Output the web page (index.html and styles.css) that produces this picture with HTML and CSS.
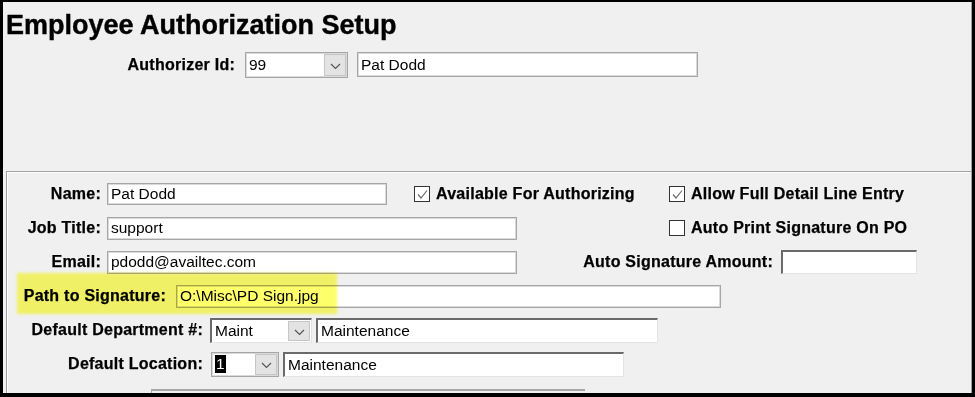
FILE: index.html
```html
<!DOCTYPE html>
<html lang="en">
<head>
  <meta charset="UTF-8">
  <title>Employee Authorization Setup</title>
  <link rel="stylesheet" href="styles.css">
</head>
<body>
  <div class="window">
    <header class="header">
      <h1 class="title">Employee Authorization Setup</h1>
      <div class="auth-row">
        <label class="label auth-label">Authorizer Id:</label>
        <div class="combo combo-flat auth-combo">
          <span class="combo-value">99</span>
          <span class="drop-btn"><svg width="11" height="7" viewBox="0 0 11 7"><polyline points="1,1 5.5,5.5 10,1" fill="none" stroke="#555" stroke-width="1.2"/></svg></span>
        </div>
        <div class="field field-flat auth-name">Pat Dodd</div>
      </div>
    </header>

    <section class="group">
      <div class="highlight"></div>

      <div class="row">
        <label class="label lbl-main">Name:</label>
        <div class="field field-flat w-name">Pat Dodd</div>
        <div class="check check-first">
          <span class="box"><svg width="13" height="13" viewBox="0 0 13 13"><polyline points="2,6.5 5,10 11,2.5" fill="none" stroke="#6b6b6b" stroke-width="1.2"/></svg></span>
          <span class="label">Available For Authorizing</span>
        </div>
        <div class="check">
          <span class="box"><svg width="13" height="13" viewBox="0 0 13 13"><polyline points="2,6.5 5,10 11,2.5" fill="none" stroke="#6b6b6b" stroke-width="1.2"/></svg></span>
          <span class="label">Allow Full Detail Line Entry</span>
        </div>
      </div>

      <div class="row">
        <label class="label lbl-main">Job Title:</label>
        <div class="field field-flat w-wide">support</div>
        <div class="check check-print">
          <span class="box"></span>
          <span class="label">Auto Print Signature On PO</span>
        </div>
      </div>

      <div class="row">
        <label class="label lbl-main">Email:</label>
        <div class="field field-flat w-wide">pdodd@availtec.com</div>
        <label class="label lbl-amount">Auto Signature Amount:</label>
        <div class="field field-sunken w-amount"></div>
      </div>

      <div class="row">
        <label class="label lbl-path">Path to Signature:</label>
        <div class="field field-flat w-path">O:\Misc\PD Sign.jpg</div>
      </div>

      <div class="row">
        <label class="label lbl-dept">Default Department #:</label>
        <div class="combo combo-sunken dept-combo">
          <span class="combo-value">Maint</span>
          <span class="drop-btn"><svg width="11" height="7" viewBox="0 0 11 7"><polyline points="1,1 5.5,5.5 10,1" fill="none" stroke="#555" stroke-width="1.2"/></svg></span>
        </div>
        <div class="field field-sunken w-dept">Maintenance</div>
      </div>

      <div class="row">
        <label class="label lbl-dept">Default Location:</label>
        <div class="combo combo-flat loc-combo">
          <span class="combo-value"><span class="selected">1</span></span>
          <span class="drop-btn"><svg width="11" height="7" viewBox="0 0 11 7"><polyline points="1,1 5.5,5.5 10,1" fill="none" stroke="#555" stroke-width="1.2"/></svg></span>
        </div>
        <div class="field field-sunken w-loc">Maintenance</div>
      </div>

      <div class="row row-cut">
        <div class="cut-edge"></div>
      </div>
    </section>
  </div>
</body>
</html>
```

FILE: styles.css
```css
body {
  margin: 0;
  padding: 0;
  background: #f0f0f0;
  font-family: "Liberation Sans", Arial, sans-serif;
  color: #000;
}
.window {
  width: 975px;
  height: 397px;
  box-sizing: border-box;
  border: 3px solid #000;
  border-top-width: 2px;
  border-bottom-width: 4px;
  background: #f0f0f0;
  box-shadow: inset -1px 0 0 #a0a0a0;
  overflow: hidden;
  display: flex;
  flex-direction: column;
}
.header {
  height: 169px;
  padding-top: 8px;
  box-sizing: border-box;
}
.title {
  margin: 0 0 0 3px;
  font-size: 27px;
  line-height: 31px;
  font-weight: bold;
  -webkit-text-stroke: 0.4px #000;
}
.auth-row {
  display: flex;
  align-items: center;
  height: 25px;
  margin-top: 11px;
}
.label {
  font-weight: bold;
  font-size: 16px;
  letter-spacing: 0.25px;
  white-space: nowrap;
  -webkit-text-stroke: 0.25px #000;
}
.auth-label {
  width: 232px;
  text-align: right;
  margin-right: 10px;
}
.field, .combo {
  box-sizing: border-box;
  background: #fff;
  font-size: 15.5px;
  white-space: nowrap;
  overflow: hidden;
}
.field {
  padding-left: 3px;
  display: flex;
  align-items: center;
}
.field-flat, .combo-flat {
  border: 1px solid #a6a6a6;
  box-shadow: inset 0 0 0 1px #dadada;
}
.field-sunken, .combo-sunken {
  border-top: 2px solid #6a6a6a;
  border-left: 2px solid #6a6a6a;
  border-right: 1px solid #e4e4e4;
  border-bottom: 1px solid #e4e4e4;
}
.combo {
  display: flex;
  align-items: stretch;
}
.combo-value {
  flex: 1;
  padding-left: 3px;
  display: flex;
  align-items: center;
}
.drop-btn {
  width: 22px;
  margin: 1px;
  background: #e3e3e3;
  border: 1px solid #c6c6c6;
  display: flex;
  align-items: center;
  justify-content: center;
  padding-top: 3px;
  box-sizing: border-box;
}
.selected {
  background: #000;
  color: #fff;
  padding: 0 1px;
  line-height: 18px;
}
.auth-combo {
  width: 103px;
  height: 26px;
}
.auth-name {
  width: 341px;
  height: 25px;
  margin-left: 9px;
}

/* lower group box */
.group {
  position: relative;
  flex: 1;
  margin-left: 3px;
  margin-right: 1px;
  border-top: 1px solid #a0a0a0;
  border-left: 1px solid #a0a0a0;
  box-shadow: inset 1px 1px 0 #fff;
  padding-top: 5px;
  padding-left: 1px;
  overflow: hidden;
}
.highlight {
  position: absolute;
  left: 10px;
  top: 101px;
  width: 320px;
  height: 41px;
  background: #ffff6c;
  mix-blend-mode: multiply;
  filter: blur(1.5px);
  z-index: 2;
}
.row {
  display: flex;
  align-items: center;
  height: 34px;
}
.lbl-main {
  width: 93px;
  text-align: right;
  margin-right: 6px;
}
.w-name { width: 280px; height: 22px; }
.w-wide { width: 410px; height: 23px; }
.check {
  display: flex;
  align-items: center;
}
.check .box {
  width: 16px;
  height: 16px;
  box-sizing: border-box;
  border: 1px solid #333;
  background: #fff;
  margin-right: 6px;
  display: flex;
  align-items: center;
  justify-content: center;
}
.check-first {
  width: 255px;
  margin-left: 27px;
}
.check-print {
  margin-left: 152px;
}
.lbl-amount {
  width: 256px;
  text-align: right;
  margin-right: 8px;
}
.w-amount { width: 136px; height: 24px; }
.lbl-path {
  width: 158px;
  text-align: right;
  margin-right: 10px;
}
.w-path { width: 545px; height: 23px; }
.lbl-dept {
  width: 195px;
  text-align: right;
  margin-right: 7px;
}
.dept-combo { width: 102px; height: 25px; }
.loc-combo { width: 68px; height: 25px; margin-left: 1px; }
.w-dept { width: 342px; height: 25px; margin-left: 4px; }
.w-loc { width: 341px; height: 25px; margin-left: 4px; }
.row-cut {
  align-items: flex-start;
}
.cut-edge {
  margin-top: 8px;
  margin-left: 143px;
  width: 433px;
  height: 10px;
  border-top: 2px solid #a8a8a8;
  border-left: 1px solid #a8a8a8;
}
```
